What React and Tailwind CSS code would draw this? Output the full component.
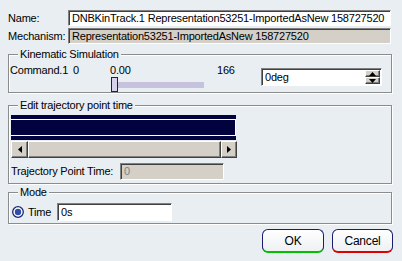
import React from "react";

const sunken =
  "border border-t-[#808080] border-l-[#808080] border-b-white border-r-white shadow-[inset_1px_1px_0_#404040]";
const raised =
  "bg-[#d4d0c8] border border-t-white border-l-white border-b-[#404040] border-r-[#404040] shadow-[inset_-1px_-1px_0_#808080]";

function Group({ title, children, className = "" }) {
  return (
    <fieldset
      className={
        "ml-[8px] w-[384px] border border-[#8c8c8c] p-0 m-0 shadow-[1px_1px_0_#fff,inset_1px_1px_0_#fff] " +
        className
      }
    >
      <legend className="ml-[9px] px-[2px] bg-[#e8eef2] leading-[13px]">{title}</legend>
      {children}
    </fieldset>
  );
}

export default function App() {
  return (
    <div
      className="w-[402px] h-[261px] bg-[#e8eef2] text-[11px] leading-[13px] tracking-[-0.2px] text-black pt-[10px] overflow-hidden"
      style={{ fontFamily: '"Liberation Sans", Arial, sans-serif' }}
    >
      <div className="flex items-center pl-[8px]">
        <div className="w-[60px]">Name:</div>
        <div className={"w-[323px] h-[16px] bg-white pl-[3px] flex items-center whitespace-nowrap overflow-hidden " + sunken}>
          DNBKinTrack.1 Representation53251-ImportedAsNew 158727520
        </div>
      </div>
      <div className="flex items-center pl-[8px] mt-[2px]">
        <div className="w-[60px]">Mechanism:</div>
        <div className={"w-[323px] h-[16px] bg-[#d4d0c8] pl-[3px] flex items-center whitespace-nowrap overflow-hidden " + sunken}>
          Representation53251-ImportedAsNew 158727520
        </div>
      </div>

      <Group title="Kinematic Simulation" className="mt-[4px] h-[45px]">
        <div className="flex">
          <div className="w-[252px] flex flex-col">
            <div className="flex mt-[3px] h-[13px]">
              <span className="pl-[1px] w-[64px]">Command.1</span>
              <span className="w-[37px]">0</span>
              <span className="w-[107px]">0.00</span>
              <span>166</span>
            </div>
            <div className="flex items-center ml-[102px] h-[15px]">
              <div className="w-[7px] h-[15px] bg-[#d6d2ea] border border-[#1c1c5c]" />
              <div className="w-[86px] h-[6px] bg-[#c6c2de]" />
            </div>
          </div>
          <div className={"w-[121px] h-[18px] mt-[7px] bg-white flex items-center " + sunken}>
            <span className="flex-1 pl-[3px]">0deg</span>
            <div className="w-[15px] h-[14px] mr-[1px] flex flex-col">
              <div className={"flex-1 flex items-center justify-center " + raised}>
                <svg width="7" height="4" viewBox="0 0 7 4"><path d="M0 4 L3.5 0 L7 4 Z" fill="#000" /></svg>
              </div>
              <div className={"flex-1 flex items-center justify-center " + raised}>
                <svg width="7" height="4" viewBox="0 0 7 4"><path d="M0 0 L3.5 4 L7 0 Z" fill="#000" /></svg>
              </div>
            </div>
          </div>
        </div>
      </Group>

      <Group title="Edit trajectory point time" className="mt-[6px] h-[85px]">
        <div className="ml-[2px] mt-[3px] w-[225px] h-[25px] bg-[#02023f] pt-[4px]">
          <div className="h-[17px] border-t border-b border-r border-white" />
        </div>
        <div className="ml-[2px] mt-[1px] w-[226px] h-[17px] flex">
          <div className={"w-[17px] h-[17px] flex items-center justify-center " + raised}>
            <svg width="4" height="7" viewBox="0 0 4 7"><path d="M4 0 L0 3.5 L4 7 Z" fill="#000" /></svg>
          </div>
          <div className={"flex-1 h-[17px] " + raised} />
          <div className={"w-[16px] h-[17px] flex items-center justify-center " + raised}>
            <svg width="4" height="7" viewBox="0 0 4 7"><path d="M0 0 L4 3.5 L0 7 Z" fill="#000" /></svg>
          </div>
        </div>
        <div className="flex items-center ml-[2px] mt-[5px]">
          <span className="w-[109px]">Trajectory Point Time:</span>
          <div className={"w-[104px] h-[17px] bg-[#d4d0c8] pl-[3px] flex items-center text-[#808080] " + sunken}>0</div>
        </div>
      </Group>

      <Group title="Mode" className="mt-[2px] h-[38px]">
        <div className="flex items-center mt-[4px] ml-[3px]">
          <svg width="12" height="12" viewBox="0 0 12 12" className="shrink-0">
            <circle cx="6" cy="6" r="5.3" fill="#fff" stroke="#1c2470" strokeWidth="1.3" />
            <circle cx="6" cy="6" r="3.2" fill="#2e4fa8" />
          </svg>
          <span className="ml-[4px] w-[29px]">Time</span>
          <div className={"w-[115px] h-[18px] bg-white pl-[3px] flex items-center " + sunken}>0s</div>
        </div>
      </Group>

      <div className="flex justify-end gap-[8px] pr-[9px] mt-[5px]">
        <button className="w-[62px] h-[24px] rounded-[6px] border border-[#1c1c6c] border-b-2 border-b-[#00c000] bg-gradient-to-b from-white to-[#eef0f2] text-[12px] leading-[14px]">
          OK
        </button>
        <button className="w-[61px] h-[24px] rounded-[6px] border border-[#1c1c6c] border-b-2 border-b-[#e00000] bg-gradient-to-b from-white to-[#eef0f2] text-[12px] leading-[14px]">
          Cancel
        </button>
      </div>
    </div>
  );
}
